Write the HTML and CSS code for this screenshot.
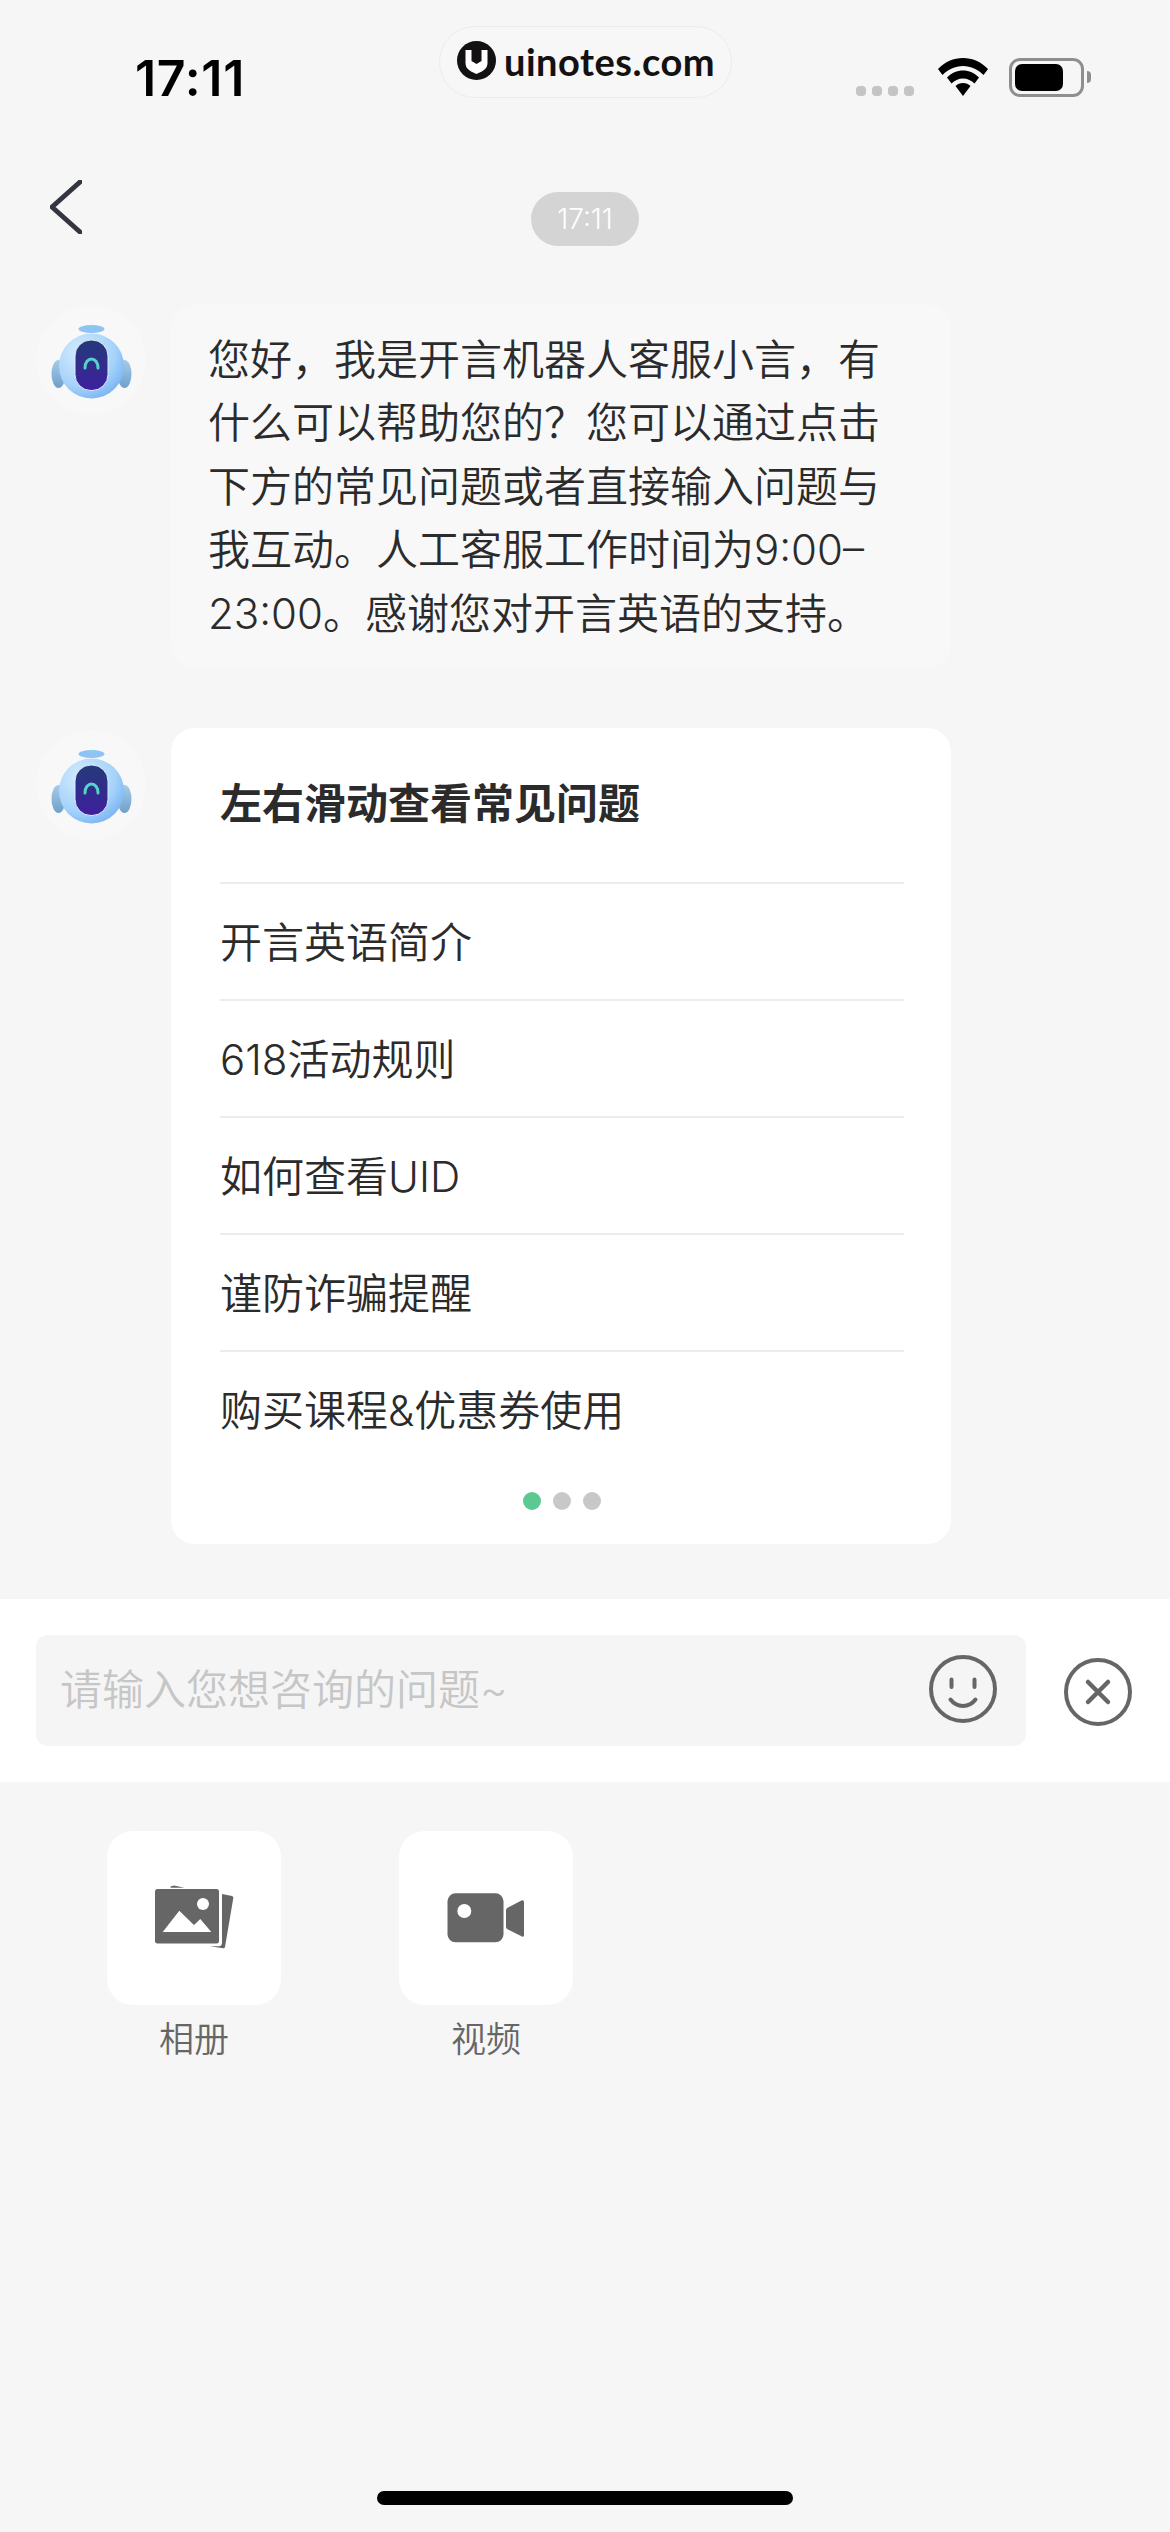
FILE: index.html
```html
<!DOCTYPE html>
<html>
<head>
  <meta charset="utf-8">
  <link rel="stylesheet" href="styles.css">
</head>
<body>
  <svg class="defs" width="0" height="0">
    <defs>
      <radialGradient id="headFill" cx="0.35" cy="0.3" r="0.85">
        <stop offset="0" stop-color="#d6ecfe"/>
        <stop offset="0.6" stop-color="#a6d3fa"/>
        <stop offset="1" stop-color="#6aa9f0"/>
      </radialGradient>
      <linearGradient id="earFill" x1="0" y1="0" x2="0" y2="1">
        <stop offset="0" stop-color="#a5cdea"/>
        <stop offset="1" stop-color="#6f9fc9"/>
      </linearGradient>
      <linearGradient id="visorFill" x1="0" y1="0" x2="0" y2="1">
        <stop offset="0" stop-color="#243a78"/>
        <stop offset="1" stop-color="#3f1f9f"/>
      </linearGradient>
      <symbol id="robot" viewBox="0 0 110 110">
        <ellipse cx="22.5" cy="69" rx="7" ry="14" fill="url(#earFill)"/>
        <ellipse cx="88.5" cy="69" rx="7" ry="14" fill="url(#earFill)"/>
        <ellipse cx="55.5" cy="24" rx="13" ry="4" fill="#8fc4f2"/>
        <circle cx="55.5" cy="21" r="1.3" fill="#6fe0dc"/>
        <circle cx="55.5" cy="61" r="32.5" fill="url(#headFill)"/>
        <rect x="39" y="35" width="33" height="50.5" rx="16" fill="url(#visorFill)" stroke="#dcecfb" stroke-width="1"/>
        <path d="M49 63C49 51 62 51 62 63" fill="none" stroke="#55d3cb" stroke-width="3" stroke-linecap="round"/>
      </symbol>
    </defs>
  </svg>

  <div class="phone">
    <div class="status-bar">
      <span class="clock">17:11</span>
      <div class="status-icons">
        <div class="signal"><i></i><i></i><i></i><i></i></div>
        <svg class="wifi" width="50" height="38" viewBox="0 0 50 38">
          <path d="M25 0C15.500 0 7 3.700 0 11L4.500 17C10 11.500 17 8 25 8C33 8 40 11.500 45.500 17L50 11C43 3.700 34.500 0 25 0Z" fill="#000"/>
          <path d="M25 12.500C19 12.500 13.500 15 9 19.500L13.500 25.500C16.500 22.500 20.500 20.500 25 20.500C29.500 20.500 33.500 22.500 36.500 25.500L41 19.500C36.500 15 31 12.500 25 12.500Z" fill="#000"/>
          <path d="M25 25C22 25 19.500 26 17.500 28L25 38L32.500 28C30.500 26 28 25 25 25Z" fill="#000"/>
        </svg>
        <div class="battery"><div class="battery-level"></div></div>
        <div class="battery-nub"></div>
      </div>
      <div class="watermark">
        <svg width="39" height="39" viewBox="0 0 39 39">
          <circle cx="19.500" cy="19.500" r="19.500" fill="#131111"/>
          <path d="M8.500 9H14.500V20L19.500 23L24.500 20V9H30.500V22C30.500 27 27 30 19.500 33C12 30 8.500 27 8.500 22Z" fill="#fff"/>
          <path d="M17.500 7H21.500V20H17.500Z" fill="#131111"/>
        </svg>
        <span>uinotes.com</span>
      </div>
    </div>

    <div class="nav">
      <svg class="back" width="32" height="54" viewBox="0 0 32 54">
        <path d="M30 2L2 27L30 52" fill="none" stroke="#33353f" stroke-width="5" stroke-linecap="round" stroke-linejoin="round"/>
      </svg>
      <span class="time-pill">17:11</span>
    </div>

    <div class="chat">
      <div class="msg">
        <div class="avatar"><svg width="110" height="110"><use href="#robot"/></svg></div>
        <div class="bubble">您好，我是开言机器人客服小言，有什么可以帮助您的？您可以通过点击下方的常见问题或者直接输入问题与我互动。人工客服工作时间为9:00–23:00。感谢您对开言英语的支持。</div>
      </div>

      <div class="msg">
        <div class="avatar avatar-low"><svg width="110" height="110"><use href="#robot"/></svg></div>
        <div class="card">
          <div class="card-title">左右滑动查看常见问题</div>
          <div class="faq">开言英语简介</div>
          <div class="faq">618活动规则</div>
          <div class="faq">如何查看UID</div>
          <div class="faq">谨防诈骗提醒</div>
          <div class="faq">购买课程&amp;优惠券使用</div>
          <div class="dots"><i class="on"></i><i></i><i></i></div>
        </div>
      </div>
    </div>

    <div class="input-bar">
      <div class="input-box">
        <span class="placeholder">请输入您想咨询的问题~</span>
        <svg width="68" height="68" viewBox="0 0 68 68" fill="none" stroke="#666" stroke-width="4" stroke-linecap="round">
          <circle cx="34" cy="34" r="32"/>
          <path d="M22.500 24.500V32M45.500 24.500V32"/>
          <path d="M21.500 44.500C28 53 40 53 46.500 44.500"/>
        </svg>
      </div>
      <svg class="close" width="68" height="68" viewBox="0 0 68 68" fill="none" stroke="#666" stroke-width="4" stroke-linecap="round">
        <circle cx="34" cy="34" r="32"/>
        <path d="M24 24L44 44M44 24L24 44" stroke-width="4.500"/>
      </svg>
    </div>

    <div class="tools">
      <div class="tool">
        <div class="tile">
          <svg width="174" height="174" viewBox="0 0 174 174" fill="#666">
            <path d="M63.500 55.500L67 54.500L77.500 56.700H63.500Z"/>
            <rect x="48" y="58" width="64" height="54.500" rx="2.500"/>
            <path d="M115 63L125 65Q126.500 65.500 126.300 67L118 116Q117.500 117.500 116 117.300L103 115.300H112Q115 115 115 112Z"/>
            <circle cx="96" cy="73" r="6" fill="#fff"/>
            <path d="M55.700 101L72.300 79.700L87 94L93.300 88L104.300 101Z" fill="#fff"/>
          </svg>
        </div>
        <span class="tool-label">相册</span>
      </div>
      <div class="tool">
        <div class="tile">
          <svg width="174" height="174" viewBox="0 0 174 174" fill="#666">
            <rect x="48.500" y="62.300" width="56" height="49" rx="8"/>
            <circle cx="65.300" cy="80" r="7" fill="#fff"/>
            <path d="M107 79Q107 77.500 109 76.500L123 69.300Q125 68.700 125 71V104Q125 106.500 123 105.500L109 98.500Q107 97.500 107 96Z"/>
          </svg>
        </div>
        <span class="tool-label">视频</span>
      </div>
    </div>

    <div class="home-bar"></div>
  </div>
</body>
</html>
```

FILE: styles.css
```css
* {
  box-sizing: border-box;
}

body {
  margin: 0;
  background-color: #f6f6f6;
  font-family: Inter, "Noto Sans CJK SC", sans-serif;
  font-weight: 350;
  color: #2b2b2b;
}

.defs {
  position: absolute;
}

.phone {
  width: 1170px;
  height: 2532px;
  display: flex;
  flex-direction: column;
  position: relative;
  overflow: hidden;
}

/* status bar */
.status-bar {
  height: 182px;
  padding: 58px 79px 0 135px;
  display: flex;
  justify-content: space-between;
  align-items: flex-start;
}

.clock {
  font-family: Inter, "Liberation Sans", sans-serif;
  font-size: 50px;
  font-weight: 600;
  line-height: 40px;
  letter-spacing: 0.7px;
  color: #000;
}

.status-icons {
  display: flex;
  align-items: flex-end;
  height: 39px;
}

.signal {
  display: flex;
  gap: 6px;
  margin-right: 24px;
  margin-bottom: 1px;
}

.signal i {
  width: 10px;
  height: 10px;
  border-radius: 4px;
  background-color: #c4c4c4;
}

.wifi {
  margin-right: 21px;
  margin-bottom: 1px;
}

.battery {
  width: 75px;
  height: 39px;
  padding: 3px;
  border: 3px solid #8e8e8e;
  border-radius: 11px;
}

.battery-level {
  width: 48px;
  height: 100%;
  border-radius: 7px;
  background-color: #000;
}

.battery-nub {
  width: 4px;
  height: 12px;
  margin: 0 0 14px 3px;
  border-radius: 0 4px 4px 0;
  background-color: #8e8e8e;
}

.watermark {
  position: absolute;
  left: 439px;
  top: 26px;
  width: 293px;
  height: 72px;
  padding: 0 0 3px 17px;
  display: flex;
  align-items: center;
  gap: 8px;
  border: 1px solid #ececec;
  border-radius: 36px;
  background-color: #f7f7f7;
  font-family: Lato, sans-serif;
  font-size: 38px;
  font-weight: 700;
  letter-spacing: 0.5px;
  color: #131111;
}

/* nav */
.nav {
  height: 64px;
  padding-left: 50px;
  display: grid;
  grid-template-columns: 1fr auto 1fr;
  margin-right: 50px;
  align-items: start;
}

.back {
  margin-top: -2px;
}

.time-pill {
  width: 108px;
  height: 54px;
  margin-top: 10px;
  border-radius: 27px;
  background-color: #d4d4d4;
  font-family: Inter, sans-serif;
  font-size: 28px;
  line-height: 54px;
  text-align: center;
  color: #fff;
}

/* chat */
.chat {
  padding: 59px 0 0 36px;
  display: flex;
  flex-direction: column;
  gap: 60px;
}

.msg {
  display: flex;
  align-items: flex-start;
  gap: 25px;
}

.avatar {
  width: 110px;
  height: 110px;
  border-radius: 50%;
  background-color: #f8f8f8;
}

.avatar-low {
  margin-top: 2px;
}

.bubble {
  width: 780px;
  padding: 23px 37px;
  border-radius: 24px;
  background-color: #f8f8f8;
  font-size: 42px;
  line-height: 63.4px;
}

.card {
  width: 780px;
  height: 816px;
  padding: 0 47px 0 49px;
  border-radius: 24px;
  background-color: #fff;
}

.card-title {
  height: 154px;
  line-height: 152px;
  font-size: 42px;
  font-weight: 600;
}

.faq {
  height: 117px;
  padding-top: 3px;
  border-top: 2px solid #ececec;
  font-size: 42px;
  line-height: 112px;
}

.dots {
  margin-top: 25px;
  display: flex;
  justify-content: center;
  gap: 12px;
}

.dots i {
  width: 18px;
  height: 18px;
  border-radius: 50%;
  background-color: #c8c8c8;
}

.dots i.on {
  background-color: #5cc992;
}

/* input */
.input-bar {
  height: 183px;
  margin-top: 55px;
  padding: 36px 38px 0 36px;
  display: flex;
  align-items: flex-start;
  justify-content: space-between;
  background-color: #fff;
}

.input-box {
  width: 990px;
  height: 111px;
  padding: 0 29px 8px 24px;
  display: flex;
  align-items: center;
  justify-content: space-between;
  border-radius: 12px;
  background-color: #f5f5f5;
}

.input-box svg {
  margin-top: 5px;
}

.placeholder {
  font-size: 42px;
  color: #c6c6c6;
}

.close {
  margin-top: 23px;
}

/* tools */
.tools {
  padding: 49px 0 0 107px;
  display: flex;
  gap: 118px;
}

.tool {
  display: flex;
  flex-direction: column;
  align-items: center;
  gap: 9px;
}

.tile {
  width: 174px;
  height: 174px;
  border-radius: 26px;
  background-color: #fff;
}

.tile svg {
  display: block;
}

.tool-label {
  font-size: 35px;
  line-height: 50px;
  color: #666;
}

.home-bar {
  width: 416px;
  height: 14px;
  margin: auto auto 27px;
  border-radius: 7px;
  background-color: #000;
}
```
